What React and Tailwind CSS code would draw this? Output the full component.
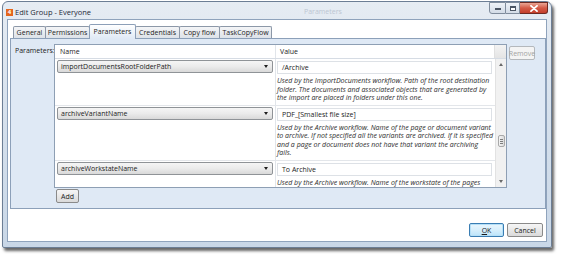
const tabs = [
  { label: "General", w: "w-[33px]" },
  { label: "Permissions", w: "w-[45px]" },
  { label: "Parameters", w: "w-[47px]", active: true },
  { label: "Credentials", w: "w-[45px]" },
  { label: "Copy flow", w: "w-[41px]" },
  { label: "TaskCopyFlow", w: "w-[53px]" },
];

const rows = [
  {
    name: "importDocumentsRootFolderPath",
    value: "/Archive",
    desc: [
      "Used by the ImportDocuments workflow. Path of the root destination",
      "folder. The documents and associated objects that are generated by",
      "the import are placed in folders under this one.",
    ],
  },
  {
    name: "archiveVariantName",
    value: "PDF_[Smallest file size]",
    desc: [
      "Used by the Archive workflow. Name of the page or document variant",
      "to archive. If not specified all the variants are archived. If it is specified",
      "and a page or document does not have that variant the archiving",
      "fails.",
    ],
  },
  {
    name: "archiveWorkstateName",
    value: "To Archive",
    desc: ["Used by the Archive workflow. Name of the workstate of the pages"],
  },
];

function Combo({ text }) {
  return (
    <div className="ml-[2px] mt-[1px] w-[216px] h-[13px] rounded-[2px] border border-[#8f9397] bg-linear-to-b from-[#f5f5f5] via-[#ebebeb] to-[#d9d9d9] flex items-center justify-between pl-[3px] pr-[4px]">
      <span className="text-[7px] leading-[9px] whitespace-nowrap">{text}</span>
      <div className="w-0 h-0 border-l-[2.5px] border-r-[2.5px] border-t-[3px] border-l-transparent border-r-transparent border-t-[#1e1e1e]" />
    </div>
  );
}

function Btn({ children, w, extra = "" }) {
  return (
    <div
      className={`${w} h-[14px] rounded-[2px] border flex items-center justify-center text-[7px] leading-[9px] ${extra}`}
    >
      {children}
    </div>
  );
}

export default function App() {
  return (
    <div className="w-[562px] h-[257px] bg-white overflow-hidden font-['Open_Sans',sans-serif] text-[#1b1b1b]">
      <div className="ml-[2px] mt-[1px] w-[550px] h-[247px] rounded-t-[6px] rounded-b-[2px] border border-[#6c7e95] bg-linear-to-b from-[#e6ecf3] via-[#d5e0ec] to-[#c9d7e7] shadow-[2px_3px_3px_rgba(0,0,0,0.6)] flex flex-col">
        {/* title bar */}
        <div className="relative h-[17px] flex items-start justify-between">
          <div className="flex items-center pl-[3px] pt-[6px] gap-[2px]">
            <div className="w-[7px] h-[7px] bg-[#e4661d] text-white text-[6px] leading-[7px] font-bold flex items-center justify-center">
              4
            </div>
            <span className="text-[7.5px] leading-[9px] text-[#1e2a38]">Edit Group - Everyone</span>
          </div>
          <span className="absolute left-[301px] top-[5px] text-[7px] leading-[9px] text-[#bcc6d2]">Parameters</span>
          <div className="flex mr-[3px] h-[12px]">
            <div className="w-[17px] h-full rounded-bl-[3px] border border-[#7f8c9c] bg-linear-to-b from-[#eef2f7] to-[#d3dce7] flex items-end justify-center pb-[3px]">
              <div className="w-[6px] h-[2px] border border-[#4b5563] bg-white" />
            </div>
            <div className="w-[14px] h-full border-y border-r border-[#7f8c9c] bg-linear-to-b from-[#eef2f7] to-[#d3dce7] flex items-center justify-center">
              <div className="w-[6px] h-[5px] border border-[#4b5563] border-t-2 bg-white" />
            </div>
            <div className="w-[28px] h-full rounded-br-[3px] border-y border-r border-[#6d2a22] bg-linear-to-b from-[#eaa595] via-[#d45a46] to-[#c43e2b] flex items-center justify-center">
              <svg width="8" height="7" viewBox="0 0 8 7">
                <path d="M1 0.8 L7 6.2 M7 0.8 L1 6.2" stroke="#fff" strokeWidth="1.8" strokeLinecap="round" />
              </svg>
            </div>
          </div>
        </div>

        {/* client area */}
        <div className="mx-[4px] h-[223px] border border-[#8fa3bc] bg-white flex flex-col">
          {/* tab strip */}
          <div className="h-[18px] pt-[4px] pl-[5px] flex items-end">
            {tabs.map((t, i) =>
              t.active ? (
                <div
                  key={t.label}
                  className={`${t.w} ${i ? "-ml-px" : ""} relative z-10 -mb-px h-[15px] border-t border-x border-[#8c9fb8] rounded-t-[2px] bg-linear-to-b from-[#ffffff] to-[#dfe9f5] flex items-start justify-center pt-[2px] text-[7px] leading-[9px] whitespace-nowrap`}
                >
                  {t.label}
                </div>
              ) : (
                <div
                  key={t.label}
                  className={`${t.w} ${i ? "-ml-px" : ""} h-[12px] border-t border-x border-[#8c98a8] rounded-t-[2px] bg-linear-to-b from-[#f4f5f7] to-[#dde2e8] flex items-center justify-center text-[7px] leading-[9px] text-[#1e1e1e] whitespace-nowrap`}
                >
                  {t.label}
                </div>
              )
            )}
          </div>

          {/* tab panel */}
          <div className="ml-[2px] h-[171px] border border-[#8ca0b9] bg-[#dfe9f5] flex items-start">
            <div className="w-[43px] pl-[4px] pt-[7px] text-[7px] leading-[9px] whitespace-nowrap">Parameters:</div>
            <div className="flex flex-col">
              {/* grid */}
              <div className="mt-[5px] w-[453px] h-[144px] border border-[#8e9fb4] bg-white flex flex-col">
                <div className="h-[14px] border-b border-[#d6dce4] flex">
                  <div className="w-[221px] h-full border-r border-[#e1e5ea] pl-[5px] flex items-center text-[7px] leading-[9px]">Name</div>
                  <div className="flex-1 h-full pl-[4px] flex items-center text-[7px] leading-[9px]">Value</div>
                  <div className="w-[12px] h-full bg-linear-to-b from-[#f3f3f3] to-[#e4e4e4] border-l border-[#e0e0e0]" />
                </div>
                <div className="h-[128px] flex">
                  <div className="w-[440px] h-full overflow-hidden">
                    {rows.map((r) => (
                      <div key={r.name} className="flex border-b border-[#e3e6ea]">
                        <div className="w-[221px] border-r border-[#e1e5ea]">
                          <Combo text={r.name} />
                        </div>
                        <div className="flex-1 min-w-0 pb-[2px]">
                          <div className="ml-[1px] mt-[2px] w-[215px] h-[13px] border border-[#dde1e6] bg-white pl-[4px] flex items-center text-[7px] leading-[9px] whitespace-nowrap">
                            {r.value}
                          </div>
                          <div className="mt-[3px] pl-[1px] italic text-[7px] leading-[8.5px] text-[#2c2c2c] whitespace-nowrap">
                            {r.desc.map((l) => (
                              <div key={l}>{l}</div>
                            ))}
                          </div>
                        </div>
                      </div>
                    ))}
                  </div>
                  {/* scrollbar */}
                  <div className="w-[11px] h-full bg-[#f1f1f1] border-l border-[#e2e2e2] flex flex-col items-center">
                    <div className="mt-[4px] w-0 h-0 border-l-[2px] border-r-[2px] border-b-[3px] border-l-transparent border-r-transparent border-b-[#6a6a6a]" />
                    <div className="mt-[69px] w-[7px] h-[12px] rounded-[2px] border border-[#a9a9a9] bg-linear-to-r from-[#f5f5f5] to-[#dcdcdc] flex flex-col items-center justify-center gap-[1px]">
                      <div className="w-[3px] h-px bg-[#7d7d7d]" />
                      <div className="w-[3px] h-px bg-[#7d7d7d]" />
                      <div className="w-[3px] h-px bg-[#7d7d7d]" />
                    </div>
                    <div className="mt-auto mb-[4px] w-0 h-0 border-l-[2px] border-r-[2px] border-t-[3px] border-l-transparent border-r-transparent border-t-[#6a6a6a]" />
                  </div>
                </div>
              </div>
              <div className="ml-[2px] mt-[1px]">
                <Btn w="w-[23px]" extra="border-[#8a8a8a] bg-linear-to-b from-[#f6f6f6] to-[#dadada]">
                  Add
                </Btn>
              </div>
            </div>
            <div className="ml-[2px] mt-[7px]">
              <Btn w="w-[26px]" extra="border-[#b4b8bc] bg-[#f4f4f4] text-[#a3a3a3]">
                Remove
              </Btn>
            </div>
          </div>

          {/* bottom buttons */}
          <div className="mt-[14px] mr-[3px] flex justify-end gap-[3px]">
            <Btn w="w-[35px]" extra="border-[#3a7db3] bg-linear-to-b from-[#eaf6fd] via-[#d7effc] to-[#bce4fa] shadow-[inset_0_0_0_1px_#b6e0f7]">
              <span>
                <span className="underline">O</span>K
              </span>
            </Btn>
            <Btn w="w-[36px]" extra="border-[#8a8a8a] bg-linear-to-b from-[#f6f6f6] to-[#dadada]">
              Cancel
            </Btn>
          </div>
        </div>
      </div>
    </div>
  );
}
